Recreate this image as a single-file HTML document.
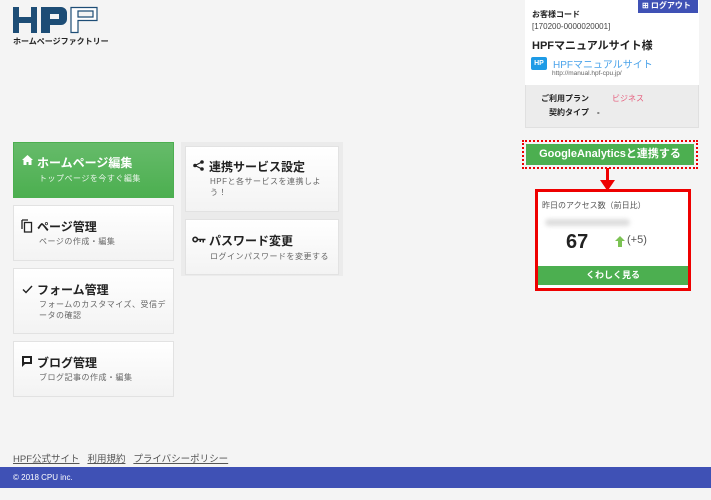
<!DOCTYPE html>
<html><head><meta charset="utf-8"><style>
*{margin:0;padding:0;box-sizing:border-box}
body{width:711px;height:500px;background:#f4f4f4;font-family:"Liberation Sans","Noto Sans CJK JP",sans-serif;position:relative;overflow:hidden;color:#222}
.a{position:absolute}
.card{position:absolute;background:linear-gradient(#fff,#f3f3f3);border:1px solid #e2e2e2;}
.t{position:absolute;font-size:12px;font-weight:bold;color:#222}
.s{position:absolute;font-size:8px;color:#666;line-height:11px;letter-spacing:.5px}
</style></head><body>
<svg class="a" style="left:13px;top:6px" width="86" height="28" viewBox="0 0 86 28">
<g fill="#1d4d76"><rect x="0" y="1" width="6" height="26"/><rect x="18" y="1" width="6" height="26"/><rect x="0" y="11" width="24" height="6"/>
<path d="M28 1h20a6 6 0 0 1 6 6v6a6 6 0 0 1-6 6H37v8h-9z M37 8v5h9V8z"/></g>
<path d="M58 1.5h26v13H65v12h-7z M65 5v6h15V5z" fill="#fff" stroke="#1d4d76" stroke-width="1.2"/>
</svg>
<div class="a" style="left:13px;top:36px;font-size:8px;font-weight:bold;color:#222">ホームページファクトリー</div>

<div class="card" style="left:13px;top:142px;width:161px;height:56px;background:linear-gradient(#66bb6a,#4caf50);border-color:#4caf50"></div>
<svg class="a" style="left:22px;top:155px" width="11" height="10" viewBox="0 0 11 10"><path d="M5.5 0L0 5h1.5v5h3V7h2v3h3V5H11z" fill="#fff"/></svg>
<div class="t" style="left:37px;top:154px;color:#fff">ホームページ編集</div>
<div class="s" style="left:39px;top:173px;color:#eaf5ea">トップページを今すぐ編集</div>

<div class="card" style="left:13px;top:205px;width:161px;height:56px"></div>
<svg class="a" style="left:21px;top:219px" width="12" height="14" viewBox="0 0 12 14"><path d="M1 1h6M1 1v9" stroke="#222" stroke-width="1.3" fill="none"/><rect x="3.5" y="3.5" width="7" height="9.5" fill="none" stroke="#222" stroke-width="1.3"/></svg>
<div class="t" style="left:37px;top:218px">ページ管理</div>
<div class="s" style="left:39px;top:236px">ページの作成・編集</div>

<div class="card" style="left:13px;top:268px;width:161px;height:66px"></div>
<svg class="a" style="left:22px;top:285px" width="11" height="9" viewBox="0 0 11 9"><path d="M1 4.5l3 3 6-6.5" stroke="#222" stroke-width="1.4" fill="none"/></svg>
<div class="t" style="left:37px;top:281px">フォーム管理</div>
<div class="s" style="left:39px;top:299px;width:132px">フォームのカスタマイズ、受信データの確認</div>

<div class="card" style="left:13px;top:341px;width:161px;height:56px"></div>
<svg class="a" style="left:21px;top:355px" width="12" height="12" viewBox="0 0 12 12"><path d="M1 1h10v8H4l-3 3z" fill="#222"/><rect x="3" y="3" width="6" height="4" fill="#fff"/></svg>
<div class="t" style="left:37px;top:354px">ブログ管理</div>
<div class="s" style="left:39px;top:372px">ブログ記事の作成・編集</div>

<div class="a" style="left:181px;top:142px;width:162px;height:134px;background:#ebebeb"></div>
<div class="card" style="left:185px;top:146px;width:154px;height:66px"></div>
<svg class="a" style="left:193px;top:160px" width="11" height="11" viewBox="0 0 11 11"><circle cx="9" cy="2" r="1.8" fill="#222"/><circle cx="2" cy="5.5" r="1.8" fill="#222"/><circle cx="9" cy="9" r="1.8" fill="#222"/><path d="M9 2L2 5.5 9 9" stroke="#222" stroke-width="1.1" fill="none"/></svg>
<div class="t" style="left:209px;top:158px">連携サービス設定</div>
<div class="s" style="left:210px;top:176px;width:126px">HPFと各サービスを連携しよう！</div>

<div class="card" style="left:185px;top:219px;width:154px;height:56px"></div>
<svg class="a" style="left:192px;top:236px" width="14" height="7" viewBox="0 0 14 7"><circle cx="3.2" cy="3.5" r="2.2" fill="none" stroke="#222" stroke-width="1.6"/><path d="M5 2.7h8.5v1.6h-1.5V6.5h-1.5V4.3H9v1.7H7.5V4.3H5z" fill="#222"/></svg>
<div class="t" style="left:209px;top:232px">パスワード変更</div>
<div class="s" style="left:210px;top:251px">ログインパスワードを変更する</div>

<div class="a" style="left:525px;top:0;width:174px;height:128px;background:#ececec;border:1px solid #e0e0e0"></div>
<div class="a" style="left:525px;top:0;width:174px;height:85px;background:#fff"></div>
<div class="a" style="left:638px;top:0;width:60px;height:13px;background:#3f51b5;color:#fff;font-size:8px;font-weight:bold;line-height:12px;padding-left:4px">⊞ ログアウト</div>
<div class="a" style="left:532px;top:9px;font-size:8px;font-weight:bold">お客様コード</div>
<div class="a" style="left:532px;top:22px;font-size:8px;color:#444">[170200-0000020001]</div>
<div class="a" style="left:532px;top:37px;font-size:11px;font-weight:bold">HPFマニュアルサイト様</div>
<div class="a" style="left:531px;top:57px;width:16px;height:13px;background:#1e9be6;border-radius:2px;color:#fff;font-size:7px;font-weight:bold;text-align:center;line-height:13px">HP</div>
<div class="a" style="left:553px;top:56px;font-size:10px;color:#4aa3ea">HPFマニュアルサイト</div>
<div class="a" style="left:552px;top:70px;font-size:6.5px;color:#666">http://manual.hpf-cpu.jp/</div>
<div class="a" style="left:541px;top:93px;font-size:8px;font-weight:bold">ご利用プラン</div>
<div class="a" style="left:612px;top:93px;font-size:8px;color:#e65a7a">ビジネス</div>
<div class="a" style="left:549px;top:107px;font-size:8px;font-weight:bold">契約タイプ　-</div>

<div class="a" style="left:522px;top:140px;width:176px;height:29px;border:2.5px dotted #e00;padding:2px"><div style="background:#4caf50;height:100%;color:#fff;font-size:11px;font-weight:bold;text-align:center;line-height:20px">GoogleAnalyticsと連携する</div></div>
<div class="a" style="left:606px;top:168px;width:3px;height:16px;background:#e00"></div>
<svg class="a" style="left:600px;top:180px" width="15" height="11" viewBox="0 0 15 11"><path d="M0 0h15L7.5 11z" fill="#e00"/></svg>

<div class="a" style="left:535px;top:189px;width:156px;height:102px;border:3px solid #e00;background:#fff"></div>
<div class="a" style="left:542px;top:200px;font-size:8px;color:#555">昨日のアクセス数（前日比）</div>
<div class="a" style="left:545px;top:219px;width:85px;height:7px;background:#ddd;border-radius:4px;filter:blur(2px)"></div>
<div class="a" style="left:566px;top:231px;font-size:20px;font-weight:bold">67</div>
<svg class="a" style="left:615px;top:236px" width="10" height="11" viewBox="0 0 10 11"><path d="M5 0L0 5h3v6h4V5h3z" fill="#7cc254"/></svg>
<div class="a" style="left:627px;top:234px;font-size:11px;color:#555">(+5)</div>
<div class="a" style="left:538px;top:266px;width:150px;height:19px;background:#4caf50;color:#fff;font-size:9px;font-weight:bold;text-align:center;line-height:19px">くわしく見る</div>

<div class="a" style="left:13px;top:451px;font-size:9.5px;color:#555"><span style="text-decoration:underline">HPF公式サイト</span>&nbsp;&nbsp;&nbsp;<span style="text-decoration:underline">利用規約</span>&nbsp;&nbsp;&nbsp;<span style="text-decoration:underline">プライバシーポリシー</span></div>
<div class="a" style="left:0;top:467px;width:711px;height:21px;background:#3f51b5;color:#fff;font-size:8px;line-height:21px;padding-left:13px">© 2018 CPU inc.</div>
</body></html>
